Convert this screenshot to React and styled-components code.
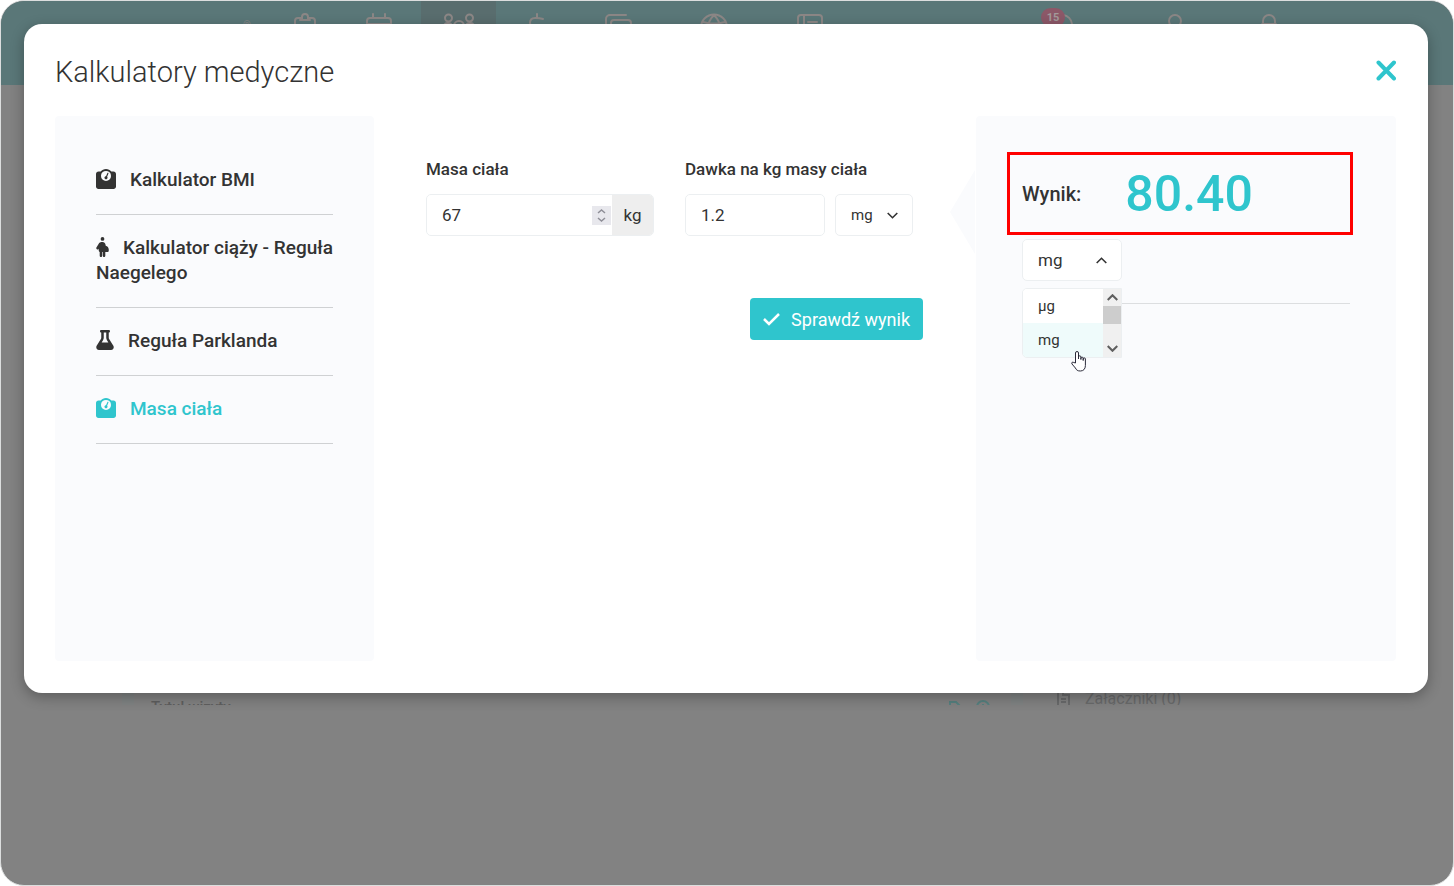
import React from "react";
import styled, { createGlobalStyle, css } from "styled-components"
import { FaWeightScale, FaPersonPregnant, FaFlask } from "react-icons/fa6"

const teal = "#2fc5cd"
const ink = "#333333"
const panel = "#fafbfd"
const line = "#eceff1"

const GlobalStyle = createGlobalStyle`
    *, *::before, *::after {
        box-sizing: border-box;
    }

    body {
        margin: 0;
        background: white;
        color: ${ink};
        font-family: Roboto, "Liberation Sans", sans-serif;
        font-size: 17px;
    }

    button, input, select {
        font-family: inherit;
        color: inherit;
    }
`

/* Page under the modal */

const Frame = styled.div`
    position: relative;
    min-height: 100vh;
    overflow: hidden;

    border: 1px solid #dcdede;
    border-radius: 24px;
    background: #828282;
`

const TopBar = styled.header`
    display: flex;
    justify-content: space-between;

    height: 84px;
    padding: 0 144px 0 220px;

    color: #8c8786;
    background: #5a7778;
`

const Nav = styled.nav`
    display: flex;
`

const NavButton = styled.button`
    display: flex;
    justify-content: center;
    align-items: flex-start;

    width: ${({ $width }) => $width}px;
    padding: 11px 0 0;
    border: 0;

    color: inherit;
    background: ${({ $active }) => $active ? "#596d6e" : "transparent"};
`

const NavSvg = styled.svg`
    flex: none;
    width: 32px;
    height: 32px;

    fill: none;
    stroke: currentColor;
    stroke-width: 2;
    stroke-linecap: round;
    stroke-linejoin: round;
`

const Trademark = styled.span`
    padding-top: 8px;
    font-size: 10px;
    line-height: 12px;
`

const BadgeHolder = styled.span`
    position: relative;
    display: flex;
`

const Badge = styled.span`
    position: absolute;
    top: -4px;
    left: -8px;

    width: 24px;
    border-radius: 10px;

    font-size: 11px;
    font-weight: 700;
    line-height: 19px;
    text-align: center;
    color: #a39a9b;
    background: #8c5868;
`

const Content = styled.main`
    display: flex;
    align-items: flex-end;

    height: 620px;
    padding-left: 121px;
    overflow: hidden;
`

const Section = styled.section`
    display: flex;
    align-items: flex-start;
    gap: 14px;

    flex: ${({ $side }) => $side ? "0 0 442px" : 1};
    height: 15px;
    padding: ${({ $side }) => $side ? "0 33px" : "0 20px 0 17px"};
    border-left: 12px solid #7f8383;

    color: ${({ $side }) => $side ? "#696a6b" : "#5f5f5f"};
`

const SectionTitle = styled.h2`
    flex: 1;
    margin: ${({ $low }) => $low ? "8px" : "0"} 0 0;

    font-size: ${({ $low }) => $low ? "15px" : "16px"};
    font-weight: ${({ $low }) => $low ? 500 : 400};
    line-height: 18px;
`

const SectionSvg = styled.svg`
    flex: none;
    width: 15px;
    height: 18px;
    margin-top: ${({ $low }) => $low ? "10px" : "0"};

    fill: none;
    stroke: ${({ $low }) => $low ? "#56807f" : "currentColor"};
    stroke-width: 2;
`

/* Modal */

const Backdrop = styled.div`
    position: absolute;
    inset: 0;
    padding: 23px 25px 23px 23px;
`

const Modal = styled.div`
    padding: 0 32px 32px 31px;
    border-radius: 18px;

    background: white;
    box-shadow: 0 4px 14px rgba(0, 0, 0, 0.3);
`

const ModalHeader = styled.div`
    display: flex;
    justify-content: space-between;
    align-items: center;

    padding: 28px 0 24px;
`

const Title = styled.h1`
    margin: 0;
    font-size: 29px;
    font-weight: 300;
    line-height: 40px;
`

const CloseButton = styled.button`
    display: flex;
    padding: 0;
    border: 0;

    color: ${teal};
    background: none;
    cursor: pointer;
`

const Columns = styled.div`
    display: grid;
    grid-template-columns: 319px minmax(0, 1fr) 420px;
    min-height: 545px;
`

const Sidebar = styled.nav`
    padding: 31px 41px;
    border-radius: 4px;
    background: ${panel};
`

const CalcLink = styled.a`
    display: block;

    padding: 20px 0 22px;
    border-bottom: 1px solid #cfd1d3;

    font-size: 19px;
    font-weight: 500;
    line-height: 25px;
    text-decoration: none;
    color: ${({ $active }) => $active ? teal : ink};

    svg {
        width: ${({ $icon }) => $icon}px;
        height: 20px;
        margin-right: 14px;
        vertical-align: -3px;
    }
`

const Form = styled.form`
    padding: 42px 53px 0 52px;
`

const Fields = styled.div`
    display: flex;
    gap: 31px;
    padding-right: 10px;
`

const Field = styled.div`
    flex: 1;
    min-width: 0;
`

const Label = styled.label`
    display: block;
    margin-bottom: 14px;

    font-size: 17px;
    font-weight: 500;
    line-height: 22px;
    white-space: nowrap;
`

const Controls = styled.div`
    display: flex;
    gap: 10px;
`

const control = css`
    height: 42px;
    border: 1px solid ${line};
    border-radius: 5px;
    background: white;
`

const InputGroup = styled.div`
    ${control}
    display: flex;
    align-items: center;
    flex: 1;
    min-width: 0;
    overflow: hidden;
`

const NumberInput = styled.input`
    flex: 1;
    min-width: 0;
    padding: 0 15px;
    border: 0;
    outline: 0;

    font-size: 17px;
    line-height: 22px;
    background: none;

    appearance: textfield;
    &::-webkit-inner-spin-button {
        appearance: none;
    }
`

const Spinner = styled.span`
    display: flex;
    align-items: center;
    justify-content: center;

    width: 19px;
    height: 19px;
    margin-right: 1px;

    color: #8f8f98;
    background: #e8e8ed;
`

const Addon = styled.span`
    width: 41px;

    line-height: 40px;
    text-align: center;
    background: #eeeeee;
`

const SelectBox = styled.div`
    ${control}
    display: grid;
    align-items: center;
    width: ${({ $width }) => $width}px;
    flex: none;

    svg {
        grid-area: 1 / 1;
        justify-self: end;
        margin-right: 14px;
        pointer-events: none;
    }
`

const Select = styled.select`
    grid-area: 1 / 1;
    width: 100%;
    height: 100%;
    padding: 0 0 0 15px;
    border: 0;
    outline: 0;

    appearance: none;
    font-size: ${({ $small }) => $small ? "15px" : "17px"};
    background: none;
`

const Actions = styled.div`
    display: flex;
    justify-content: flex-end;
    margin-top: 62px;
`

const SubmitButton = styled.button`
    display: flex;
    align-items: center;
    gap: 11px;

    height: 42px;
    padding: 0 13px;
    border: 0;
    border-radius: 4px;

    font-size: 18px;
    color: white;
    background: ${teal};
    cursor: pointer;
`

const Result = styled.aside`
    position: relative;
    padding: 36px 43px 0 31px;
    border-radius: 4px;
    background: ${panel};

    /* pointer towards the form */
    &::before {
        content: "";
        position: absolute;
        top: 54px;
        left: -26px;

        width: 25px;
        height: 84px;
        background: ${panel};
        clip-path: polygon(100% 0, 100% 100%, 0 50%);
    }
`

const ResultBox = styled.div`
    display: flex;
    align-items: center;
    gap: 44px;

    height: 83px;
    padding: 0 12px;
    border: 3px solid #ff0000;
`

const ResultLabel = styled.span`
    font-size: 20px;
    font-weight: 500;
`

const ResultValue = styled.output`
    font-size: 50px;
    font-weight: 500;
    line-height: 60px;
    color: ${teal};
`

const ResultUnit = styled.div`
    position: relative;
    margin: 4px 3px 0 15px;
    padding-bottom: 22px;
    border-bottom: 1px solid #dcdee0;
`

const UnitMenu = styled.div`
    position: absolute;
    top: 49px;
    left: 0;

    display: flex;
    width: 100px;
    border: 1px solid ${line};
    border-radius: 5px 0 0 5px;
    overflow: hidden;
    background: white;
`

const UnitList = styled.ul`
    flex: 1;
    margin: 0;
    padding: 0;
    list-style: none;
`

const Unit = styled.li`
    padding-left: 15px;

    font-size: 15px;
    line-height: 34px;
    background: ${({ $active }) => $active ? "#effbfb" : "white"};
`

const ScrollBar = styled.div`
    display: flex;
    flex-direction: column;
    align-items: center;
    width: 18px;

    color: #606060;
    background: #f0f0f0;
`

const ScrollThumb = styled.span`
    width: 18px;
    height: 18px;
    background: #cdcdcd;
`

const ScrollArrow = styled.span`
    display: flex;
    align-items: center;
    height: 17px;
    margin-top: ${({ $last }) => $last ? "auto" : "0"};
`

const Pointer = styled.svg`
    position: absolute;
    top: 112px;
    left: 49px;
`

const Chevron = ({ up, bold }) => (
    <svg width={11} height={7} viewBox="0 0 11 7" fill="none" stroke="currentColor" strokeWidth={bold ? 2.2 : 1.6} aria-hidden="true">
        <path d={up ? "M.7 6 L5.5 1.3 L10.3 6" : "M.7 1 L5.5 5.7 L10.3 1"} />
    </svg>
)

const navItems = [
    { label: "Wizyty", width: 64, d: "M12 6h-3a3 3 0 0 0-3 3v18h20V9a3 3 0 0 0-3-3h-3M11 8h10M13 7V5a3 3 0 0 1 6 0v2" },
    { label: "Kalendarz", width: 84, d: "M7 6h18a3 3 0 0 1 3 3v18H4V9a3 3 0 0 1 3-3zM10 2v4M22 2v4M4 12h24" },
    { label: "Pacjenci", width: 75, active: true, d: "M2 6a3.500 3.500 0 1 0 7 0a3.500 3.500 0 1 0-7 0M23 6a3.500 3.500 0 1 0 7 0a3.500 3.500 0 1 0-7 0M11 14a5 5 0 1 1 10 0a5 5 0 1 1-10 0M1 13c1-1.500 2.500-2 4-2s2.500 0 3 1M31 13c-1-1.500-2.500-2-4-2s-2.500 0-3 1" },
    { label: "Rozliczenia", width: 82, d: "M16 2v4M22 7c-3-1-5-1-8-1c-3 0-5 2-5 5c0 7 14 3 14 10c0 5-10 5-14 2" },
    { label: "Dokumenty", width: 80, d: "M24 3H8a4 4 0 0 0-4 4v14M12 8h14a3 3 0 0 1 3 3v16H9V11a3 3 0 0 1 3-3zM19 13v8M15 17h8" },
    { label: "Portal", width: 112, d: "M3 15.500a13 13 0 1 0 26 0a13 13 0 1 0-26 0M16 3c-8 8-8 18 0 26M16 3c8 8 8 18 0 26M5 10c7 2 15 2 22 0" },
    { label: "Raporty", width: 80, d: "M7 3h18a3 3 0 0 1 3 3v22H4V6a3 3 0 0 1 3-3zM10 3v25M14 10h9M14 16h9" },
]

const calculators = [
    { label: "Kalkulator BMI", icon: FaWeightScale, width: 20, viewBox: "0 0 512 512" },
    { label: "Kalkulator ciąży - Reguła Naegelego", icon: FaPersonPregnant, width: 13, viewBox: "32 0 320 512" },
    { label: "Reguła Parklanda", icon: FaFlask, width: 18, viewBox: "0 0 448 512" },
    { label: "Masa ciała", icon: FaWeightScale, width: 20, viewBox: "0 0 512 512", active: true },
]

function Background() {
    return (
        <>
            <TopBar>
                <Nav>
                    <NavButton as="span" $width={52}><Trademark>®</Trademark></NavButton>
                    {navItems.map(x => (
                        <NavButton key={x.label} type="button" aria-label={x.label} $width={x.width} $active={x.active}>
                            <NavSvg viewBox="0 0 32 32"><path d={x.d} /></NavSvg>
                        </NavButton>
                    ))}
                </Nav>
                <Nav>
                    <NavButton type="button" aria-label="Powiadomienia" $width={112}>
                        <BadgeHolder>
                            <NavSvg viewBox="0 0 32 32"><path d="M14 3a10 10 0 0 1 9 9v8H6v-8a8 8 0 0 1 8-9" /></NavSvg>
                            <Badge>15</Badge>
                        </BadgeHolder>
                    </NavButton>
                    <NavButton type="button" aria-label="Konto" $width={108}>
                        <NavSvg viewBox="0 0 32 32"><circle cx="16" cy="9" r="6" /><path d="M5 28c0-14 22-14 22 0" /></NavSvg>
                    </NavButton>
                    <NavButton type="button" aria-label="Wyloguj" $width={80}>
                        <NavSvg viewBox="0 0 32 32"><path d="M10 13V9a6 6 0 0 1 12 0v4M9 12h14v14H9z" /></NavSvg>
                    </NavButton>
                </Nav>
            </TopBar>
            <Content>
                <Section>
                    <SectionTitle $low>Tytuł wizyty</SectionTitle>
                    <SectionSvg $low viewBox="0 0 15 18"><path d="M3 12V2h6l4 4v10" /></SectionSvg>
                    <SectionSvg $low viewBox="0 0 15 18"><circle cx="7" cy="7" r="6" /><path d="M7 4v6" /></SectionSvg>
                </Section>
                <Section $side>
                    <SectionSvg viewBox="0 0 15 18"><path d="M2 0v18M13 4v14M7 0v5h6M5 9h5M5 12h5" /></SectionSvg>
                    <SectionTitle>Załączniki (0)</SectionTitle>
                </Section>
            </Content>
        </>
    )
}

export default class App extends React.Component {

    state = {
        mass: "67",
        dose: "1.2",
        doseUnit: "mg",
        resultUnit: "mg"
    }

    set = (name) => (e) => {
        this.setState({
            [name]: e.target.value
        });
    }

    render() {
        const { mass, dose, doseUnit, resultUnit } = this.state;
        const result = (mass * dose).toFixed(2);

        return (
            <Frame>
                <GlobalStyle />
                <Background />

                <Backdrop>
                    <Modal role="dialog" aria-labelledby="title">
                        <ModalHeader>
                            <Title id="title">Kalkulatory medyczne</Title>
                            <CloseButton type="button" aria-label="Zamknij">
                                <svg width="20" height="24" viewBox="0 0 20 24" stroke="currentColor" strokeWidth="4" strokeLinecap="round">
                                    <path d="M2.5 2.500 L18 18.500 M18 2.500 L2.500 18.500" />
                                </svg>
                            </CloseButton>
                        </ModalHeader>

                        <Columns>
                            <Sidebar>
                                {calculators.map(({ label, icon: Icon, width, viewBox, active }) => (
                                    <CalcLink key={label} href="#" $icon={width} $active={active}>
                                        <Icon viewBox={viewBox} />
                                        {label}
                                    </CalcLink>
                                ))}
                            </Sidebar>

                            <Form onSubmit={e => e.preventDefault()}>
                                <Fields>
                                    <Field>
                                        <Label htmlFor="mass">Masa ciała</Label>
                                        <Controls>
                                            <InputGroup>
                                                <NumberInput id="mass" type="number" value={mass} onChange={this.set("mass")} />
                                                <Spinner>
                                                    <svg width="9" height="13" viewBox="0 0 9 13" fill="none" stroke="currentColor" strokeWidth="1.5">
                                                        <path d="M1 4 L4.500 1 L8 4 M1 9 L4.500 12 L8 9" />
                                                    </svg>
                                                </Spinner>
                                                <Addon>kg</Addon>
                                            </InputGroup>
                                        </Controls>
                                    </Field>
                                    <Field>
                                        <Label htmlFor="dose">Dawka na kg masy ciała</Label>
                                        <Controls>
                                            <InputGroup>
                                                <NumberInput id="dose" type="text" value={dose} onChange={this.set("dose")} />
                                            </InputGroup>
                                            <SelectBox $width={78}>
                                                <Select $small aria-label="Jednostka dawki" value={doseUnit} onChange={this.set("doseUnit")}>
                                                    <option>µg</option>
                                                    <option>mg</option>
                                                </Select>
                                                <Chevron />
                                            </SelectBox>
                                        </Controls>
                                    </Field>
                                </Fields>
                                <Actions>
                                    <SubmitButton type="submit">
                                        <svg width="17" height="14" viewBox="0 0 17 14" fill="none" stroke="currentColor" strokeWidth="2.5">
                                            <path d="M1 7 L6 12 L16 2" />
                                        </svg>
                                        Sprawdź wynik
                                    </SubmitButton>
                                </Actions>
                            </Form>

                            <Result>
                                <ResultBox>
                                    <ResultLabel>Wynik:</ResultLabel>
                                    <ResultValue>{result}</ResultValue>
                                </ResultBox>
                                <ResultUnit>
                                    <SelectBox $width={100}>
                                        <Select aria-label="Jednostka wyniku" value={resultUnit} onChange={this.set("resultUnit")}>
                                            <option>µg</option>
                                            <option>mg</option>
                                        </Select>
                                        <Chevron up />
                                    </SelectBox>
                                    <UnitMenu>
                                        <UnitList role="listbox" aria-label="Jednostki">
                                            {["µg", "mg"].map(x => (
                                                <Unit key={x} role="option" aria-selected={x === resultUnit} $active={x === resultUnit}>{x}</Unit>
                                            ))}
                                        </UnitList>
                                        <ScrollBar>
                                            <ScrollArrow><Chevron up bold /></ScrollArrow>
                                            <ScrollThumb />
                                            <ScrollArrow $last><Chevron bold /></ScrollArrow>
                                        </ScrollBar>
                                    </UnitMenu>
                                    <Pointer width="15" height="21" viewBox="0 0 15 21" fill="white" stroke="#2b2b3a" strokeLinejoin="round">
                                        <path d="M4.500 12V2a1.500 1.500 0 0 1 3 0v6V6a1.200 1.200 0 0 1 2.400 0v2.500V7a1.200 1.200 0 0 1 2.300 0v2.500V8a1.100 1.100 0 0 1 2.200 0v6.500c0 3.500-2 5.500-5 5.500c-3 0-4-1-5-3L1 13c-1-1.500 .8-2.500 1.800-1.500z" />
                                    </Pointer>
                                </ResultUnit>
                            </Result>
                        </Columns>
                    </Modal>
                </Backdrop>
            </Frame>
        )
    }

}
